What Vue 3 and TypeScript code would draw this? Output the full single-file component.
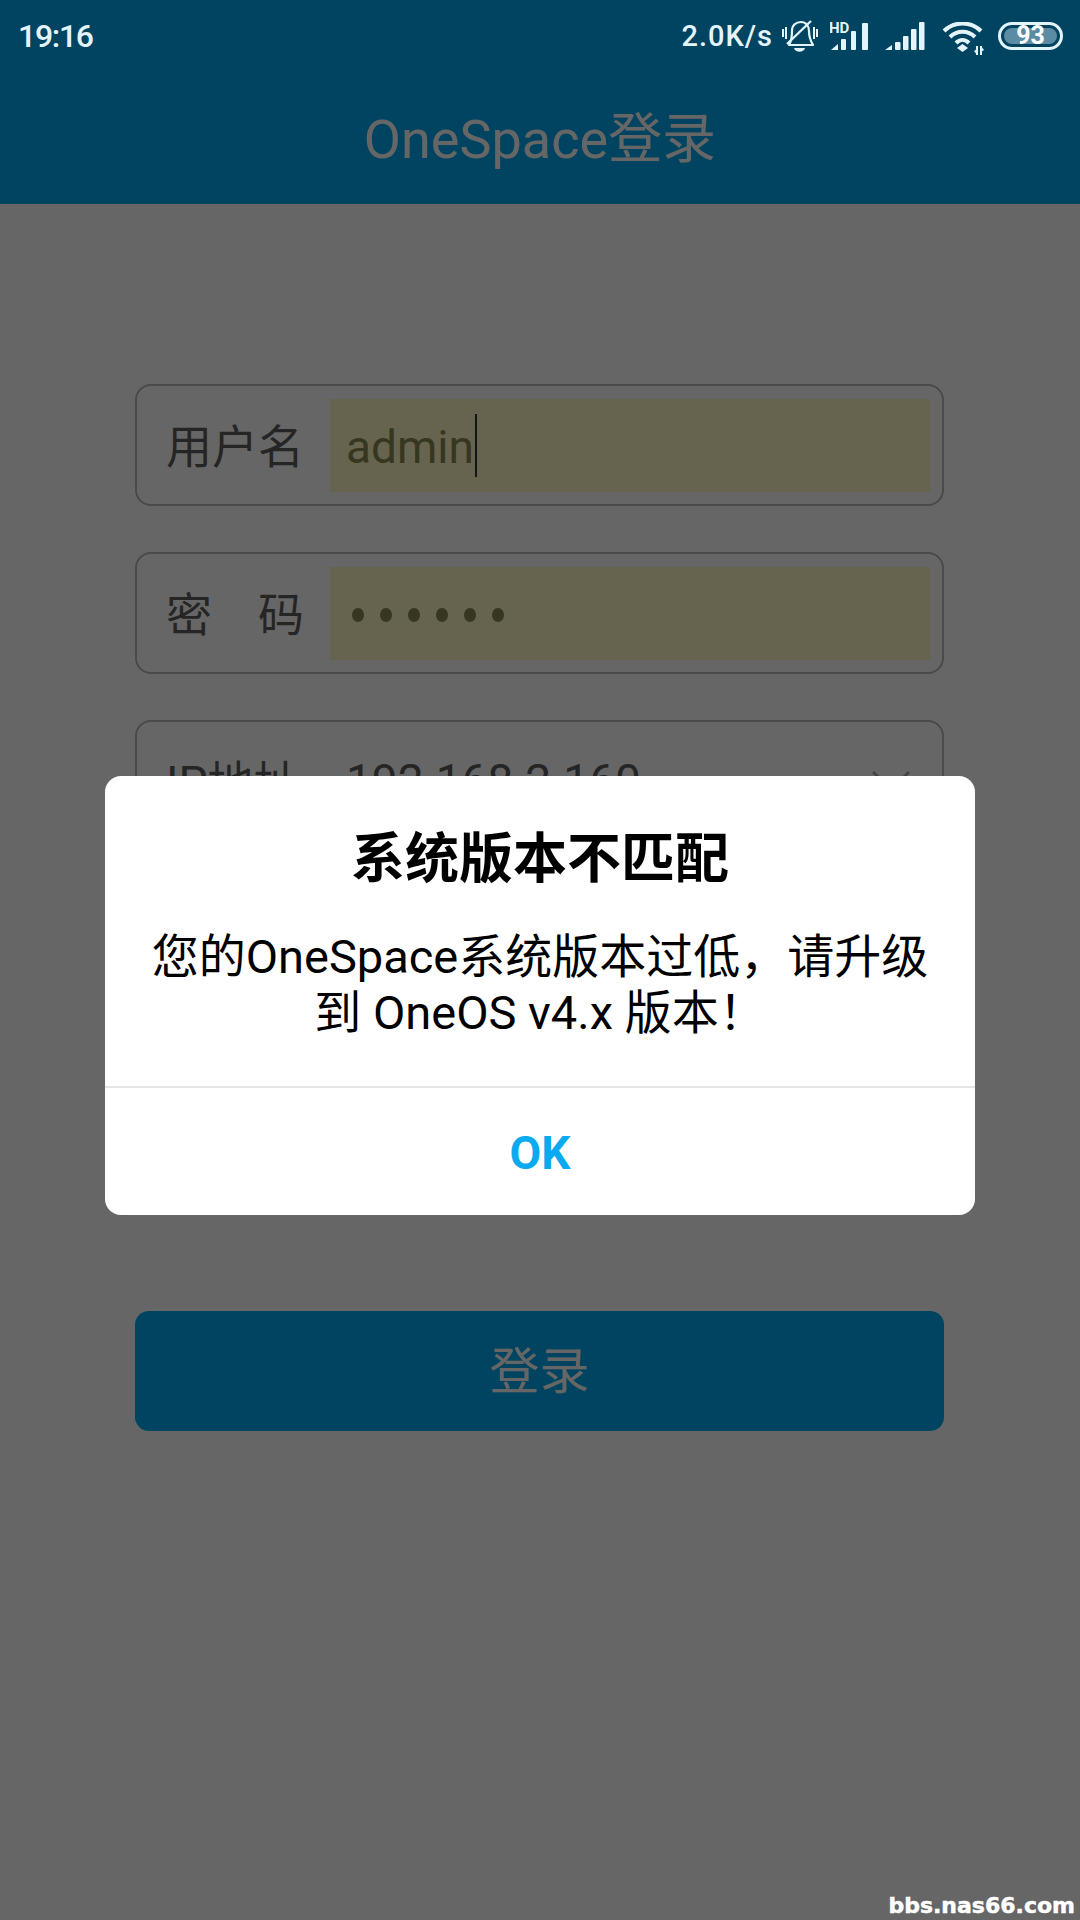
<script setup lang="ts">
const passwordDots: number[] = [1, 2, 3, 4, 5, 6]
// x, top of each signal bar, in the icon's own coordinates
const hdBars = [
  { x: 11, y: 18, w: 5 },
  { x: 21, y: 10, w: 5 },
  { x: 32, y: 2, w: 6 }
]
const signalBars = [
  { x: 10, y: 21 },
  { x: 18, y: 15 },
  { x: 26, y: 8 },
  { x: 34, y: 1 }
]
</script>

<template>
  <div class="page">
    <header class="app-bar">
      <h1 class="app-title">OneSpace登录</h1>
    </header>

    <main class="form">
      <div class="field">
        <span class="label">用户名</span>
        <div class="input">admin<i class="caret"></i></div>
      </div>
      <div class="field">
        <span class="label">密　码</span>
        <div class="input">
          <span class="dots"><i v-for="d in passwordDots" :key="d"></i></span>
        </div>
      </div>
      <div class="field">
        <span class="label">IP地址</span>
        <div class="select">
          <span>192.168.2.160</span>
          <svg width="38" height="22" viewBox="0 0 38 22" fill="none" stroke="#aaa" stroke-width="3">
            <path d="M1 2 L19 19 L37 2" />
          </svg>
        </div>
      </div>
      <button class="login">登录</button>
    </main>

    <div class="overlay">
      <div class="dialog">
        <div class="dialog-body">
          <h2>系统版本不匹配</h2>
          <p>您的OneSpace系统版本过低，请升级到 OneOS v4.x 版本！</p>
        </div>
        <div class="dialog-action">OK</div>
      </div>
    </div>

    <div class="status">
      <span class="time">19:16</span>
      <div class="status-right">
        <span class="speed">2.0K/s</span>

        <svg class="bell" width="36" height="33" viewBox="0 0 36 33" fill="none" stroke="#e4f4fb">
          <path d="M7 25 C10 20 10 15 10 11 C10 5 14 2 19 2 C24 2 27 6 27 11 C27 16 28 20 31 25 Z" stroke-width="2.2" stroke-linejoin="round" />
          <path d="M5 24 L29 1" stroke-width="2.4" />
          <path d="M12 28 H23 C22 33 13 33 12 28 Z" fill="#e4f4fb" stroke="none" />
          <path d="M1 9 V17 M4 7 V19 M32 7 V19 M35 9 V17" stroke-width="2" />
        </svg>

        <svg class="hd" width="41" height="30" viewBox="0 0 41 30">
          <text x="-1" y="12" class="hd-text">HD</text>
          <path d="M1 29 L8 23 V29 Z" fill="#e4f4fb" />
          <rect v-for="b in hdBars" :key="b.x" :x="b.x" :y="b.y" :width="b.w" :height="29 - b.y" rx="1" fill="#e4f4fb" />
        </svg>

        <svg class="signal" width="40" height="30" viewBox="0 0 40 30">
          <path d="M0 29 L7 24 V29 Z" fill="#e4f4fb" />
          <rect v-for="b in signalBars" :key="b.x" :x="b.x" :y="b.y" width="5.5" :height="29 - b.y" rx="1" fill="#e4f4fb" />
        </svg>

        <svg class="wifi" width="43" height="33" viewBox="0 0 43 33" fill="none" stroke="#e4f4fb" stroke-width="4">
          <path d="M2 9 C12 -1 29 -1 39 9" />
          <path d="M8 15 C15 8 26 8 33 15" />
          <path d="M14 21 C18 17 23 17 27 21" />
          <path d="M20.5 22 L26 26 L20.5 30 L15 26 Z" fill="#e4f4fb" stroke="none" />
          <path d="M35 24 V33 M39 24 V33" stroke-width="2" />
          <path d="M32 29 L35 33 L35 27 Z M42 28 L39 24 L39 30 Z" fill="#e4f4fb" stroke="none" />
        </svg>

        <div class="battery">
          <div class="battery-fill">93</div>
        </div>
      </div>
    </div>

    <span class="watermark">bbs.nas66.com</span>
  </div>
</template>

<style>
body {
  margin: 0;
}
</style>

<style scoped>
.page {
  position: relative;
  width: 1080px;
  height: 1920px;
  overflow: hidden;
  background: #fff;
  font-family: Roboto, "Noto Sans CJK SC", sans-serif;
}
.app-bar {
  height: 204px;
  padding-top: 64px;
  box-sizing: border-box;
  background: #00aaf2;
  display: flex;
  justify-content: center;
  align-items: center;
}
.app-title {
  margin: 0;
  color: #fff;
  font-size: 54px;
  font-weight: 400;
}
.form {
  padding: 180px 136px 0 135px;
  display: flex;
  flex-direction: column;
  gap: 46px;
}
.field {
  height: 122px;
  box-sizing: border-box;
  border: 2px solid #b8b8b8;
  border-radius: 16px;
  padding: 0 12px 0 29px;
  display: flex;
  align-items: center;
  color: #5c5c5c;
  font-size: 46px;
}
.label {
  width: 164px;
  flex: none;
  margin-top: -4px;
}
.input {
  flex: 1;
  height: 93px;
  box-sizing: border-box;
  padding: 3px 0 0 16px;
  background: #fffbc3;
  color: #8a8850;
  font-size: 46px;
  display: flex;
  align-items: center;
}
.caret {
  width: 2px;
  height: 63px;
  margin: -3px 0 0 1px;
  background: #333;
}
.dots {
  display: flex;
  gap: 16px;
  margin-left: 6px;
}
.dots i {
  width: 12px;
  height: 14px;
  border-radius: 50%;
  background: #8a8850;
}
.select {
  flex: 1;
  padding-left: 16px;
  padding-right: 20px;
  font-size: 46px;
  display: flex;
  align-items: center;
  justify-content: space-between;
}
.login {
  margin-top: 423px;
  height: 120px;
  padding: 0 0 8px;
  border: 0;
  border-radius: 14px;
  background: #00aaf2;
  color: #fff;
  font-family: inherit;
  font-size: 50px;
}
.overlay {
  position: absolute;
  inset: 0;
  background: rgba(0, 0, 0, 0.6);
  display: flex;
  justify-content: center;
  align-items: flex-start;
  padding-top: 776px;
  box-sizing: border-box;
}
.dialog {
  width: 870px;
  height: 439px;
  background: #fff;
  border-radius: 16px;
  display: flex;
  flex-direction: column;
  overflow: hidden;
}
.dialog-body {
  height: 312px;
  padding: 49px 44px 0;
  box-sizing: border-box;
  border-bottom: 2px solid #e5e5e5;
  text-align: center;
  color: #000;
}
.dialog-body h2 {
  margin: 0;
  font-size: 54px;
  line-height: 70px;
  font-weight: 700;
}
.dialog-body p {
  margin: 34px 0 0;
  font-size: 47px;
  line-height: 56px;
}
.dialog-action {
  flex: 1;
  padding-top: 2px;
  display: flex;
  align-items: center;
  justify-content: center;
  color: #0aaaf0;
  font-size: 46px;
  font-weight: 700;
}
.status {
  position: absolute;
  top: 0;
  left: 0;
  right: 0;
  height: 72px;
  padding: 0 17px 0 18px;
  display: flex;
  align-items: center;
  justify-content: space-between;
  box-sizing: border-box;
  color: #e4f4fb;
}
.time {
  font-size: 32px;
  font-weight: 500;
  letter-spacing: -1.3px;
}
.status-right {
  display: flex;
  align-items: center;
}
.speed {
  font-size: 29px;
  font-weight: 500;
  letter-spacing: 1px;
  line-height: 40px;
}
.bell {
  margin-left: 9px;
}
.hd {
  margin-left: 12px;
}
.hd-text {
  font-family: Roboto, sans-serif;
  font-size: 15px;
  font-weight: 700;
  fill: #e4f4fb;
}
.signal {
  margin-left: 14px;
}
.wifi {
  margin-left: 17px;
  margin-top: 4px;
}
.battery {
  margin-left: 13px;
  width: 65px;
  height: 28px;
  box-sizing: border-box;
  border: 3px solid #e4f4fb;
  border-radius: 14px;
  padding: 3px;
  display: flex;
}
.battery-fill {
  flex: 1;
  border-radius: 9px;
  background: #5b8ca4;
  color: #fff;
  font-size: 25px;
  font-weight: 700;
  line-height: 16px;
  text-align: center;
}
.watermark {
  position: absolute;
  right: 5px;
  bottom: 2px;
  color: #fff;
  font-family: "DejaVu Sans", sans-serif;
  font-size: 22px;
  font-weight: 700;
  -webkit-text-stroke: 0.5px #fff;
}
</style>
